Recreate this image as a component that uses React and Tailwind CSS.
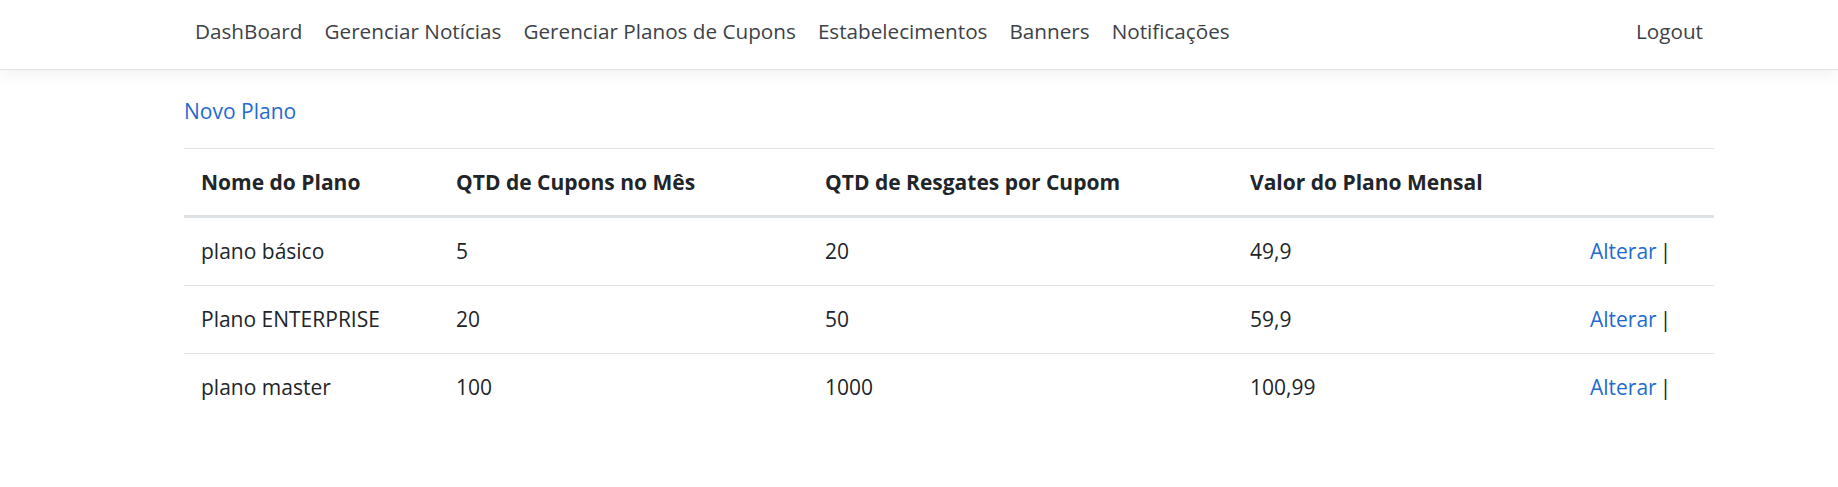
const navLinks = [
  "DashBoard",
  "Gerenciar Notícias",
  "Gerenciar Planos de Cupons",
  "Estabelecimentos",
  "Banners",
  "Notificações",
];

const planos = [
  { nome: "plano básico", cupons: "5", resgates: "20", valor: "49,9" },
  { nome: "Plano ENTERPRISE", cupons: "20", resgates: "50", valor: "59,9" },
  { nome: "plano master", cupons: "100", resgates: "1000", valor: "100,99" },
];

function Navbar() {
  return (
    <header className="h-[70px] border-b border-[#dee2e6] bg-white shadow-[0_5px_16px_rgba(0,0,0,0.05)]">
      <nav className="ml-[184px] flex w-[1530px] items-center justify-between pt-[15px] text-[20.7px] leading-[33px]">
        <ul className="flex">
          {navLinks.map((link) => (
            <li key={link}>
              <a href="#" className="px-[11px] text-[#3d4247]">
                {link}
              </a>
            </li>
          ))}
        </ul>
        <a href="#" className="px-[11px] text-[#3d4247]">
          Logout
        </a>
      </nav>
    </header>
  );
}

function App() {
  return (
    <div className="min-h-[487px] bg-white font-['Open_Sans',sans-serif] text-[21px] leading-[33px] text-[#212529]">
      <Navbar />
      <main className="ml-[184px] w-[1530px] pt-[25px]">
        <p className="mb-[20px]">
          <a href="#" className="text-[#1f6bd0]">
            Novo Plano
          </a>
        </p>
        <table className="w-full border-collapse text-left">
          <thead>
            <tr>
              <th className="w-[255px] border-t border-b-[3px] border-[#dee2e6] px-[17px] py-[16.5px] font-bold">
                Nome do Plano
              </th>
              <th className="w-[369px] border-t border-b-[3px] border-[#dee2e6] px-[17px] py-[16.5px] font-bold">
                QTD de Cupons no Mês
              </th>
              <th className="w-[425px] border-t border-b-[3px] border-[#dee2e6] px-[17px] py-[16.5px] font-bold">
                QTD de Resgates por Cupom
              </th>
              <th className="w-[340px] border-t border-b-[3px] border-[#dee2e6] px-[17px] py-[16.5px] font-bold">
                Valor do Plano Mensal
              </th>
              <th className="border-t border-b-[3px] border-[#dee2e6] px-[17px] py-[16.5px]"></th>
            </tr>
          </thead>
          <tbody>
            {planos.map((p, i) => (
              <tr key={p.nome} className={i > 0 ? "border-t border-[#dee2e6]" : ""}>
                <td className="px-[17px] py-[17px]">{p.nome}</td>
                <td className="px-[17px] py-[17px]">{p.cupons}</td>
                <td className="px-[17px] py-[17px]">{p.resgates}</td>
                <td className="px-[17px] py-[17px]">{p.valor}</td>
                <td className="px-[17px] py-[17px]">
                  <a href="#" className="text-[#1f6bd0]">
                    Alterar
                  </a>
                  <span className="ml-[3px]">|</span>
                </td>
              </tr>
            ))}
          </tbody>
        </table>
      </main>
    </div>
  );
}

export default App;
